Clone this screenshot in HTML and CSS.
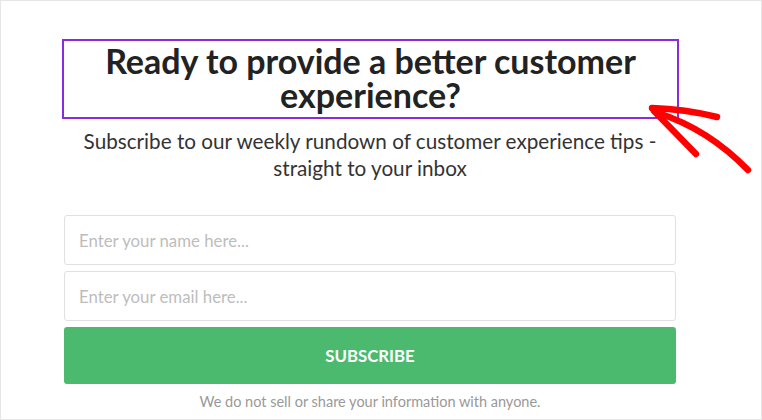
FILE: index.html
```html
<!doctype html>
<html lang="en">
  <head>
    <meta charset="UTF-8" />
    <meta name="viewport" content="width=device-width, initial-scale=1.0" />
    <title>Newsletter Signup</title>
    <link rel="stylesheet" href="styles.css">
  </head>
  <body>
    <div class="frame">
      <div class="signup">
        <h2 class="headline">Ready to provide a better customer experience?</h2>
        <p class="lead">Subscribe to our weekly rundown of customer experience tips - straight to your inbox</p>
        <form class="signup-form">
          <input type="text" placeholder="Enter your name here..." />
          <input type="email" placeholder="Enter your email here..." />
          <button type="submit">Subscribe</button>
        </form>
        <p class="note">We do not sell or share your information with anyone.</p>
      </div>

      <!-- hand-drawn annotation arrow -->
      <svg class="arrow" width="120" height="85" viewBox="0 0 120 85">
        <g fill="none" stroke="#f00" stroke-linecap="round" stroke-width="6.5">
          <path d="M12 13 Q45 14 77 22" />
          <path d="M14 16 L56 59" />
          <path d="M18 18 Q68 34 108 75" />
        </g>
      </svg>
    </div>
  </body>
</html>
```

FILE: styles.css
```css
body {
  margin: 0;
  font-family: Lato, "Liberation Sans", sans-serif;
  color: #222;
}
.frame {
  position: relative;
  width: 760px;
  height: 418px;
  border: 1px solid #e6e6e6;
  background: #fff;
  overflow: hidden;
}
.signup {
  width: 612px;
  margin-left: 63px;
  padding-top: 38px;
}
.headline {
  margin: 0 -3px 0 -2px;
  padding: 3px 10px 5px;
  border: 2px solid #8a2be2;
  font-size: 34px;
  font-weight: 700;
  line-height: 34px;
  text-align: center;
  color: #222;
}
.lead {
  margin: 9px 0 0;
  font-size: 20.7px;
  line-height: 27px;
  text-align: center;
  color: #333;
}
.signup-form {
  display: flex;
  flex-direction: column;
  gap: 6px;
  margin-top: 33px;
}
.signup-form input {
  height: 50px;
  box-sizing: border-box;
  padding: 0 14px;
  border: 1px solid #e0e0e0;
  border-radius: 3px;
  font-family: inherit;
  font-size: 16.8px;
  color: #333;
}
.signup-form input::placeholder {
  color: #bdbdbd;
}
.signup-form button {
  height: 57px;
  border: 0;
  border-radius: 3px;
  background: #4bba6f;
  color: #fff;
  font-family: inherit;
  font-size: 16.8px;
  font-weight: 700;
  text-transform: uppercase;
}
.note {
  margin: 9px 0 0;
  font-size: 14.5px;
  text-align: center;
  color: #999;
}
.arrow {
  position: absolute;
  left: 639px;
  top: 94px;
}
```
